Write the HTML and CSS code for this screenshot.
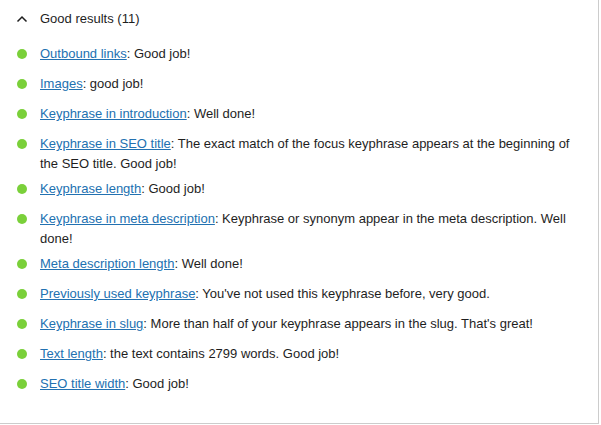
FILE: index.html
```html
<!DOCTYPE html>
<html lang="en">
<head>
    <meta charset="UTF-8">
    <meta name="viewport" content="width=device-width, initial-scale=1.0">
    <title>Good results</title>
    <link rel="stylesheet" href="styles.css">
</head>
<body>
    <div class="panel">
        <button class="toggle" type="button" aria-expanded="true">
            <svg class="chevron" width="12" height="8" viewBox="0 0 12 8" aria-hidden="true">
                <path d="M1.5 6.5 L6 2 L10.5 6.5" fill="none" stroke="#1e1e1e" stroke-width="1.5"/>
            </svg>
            <span>Good results (11)</span>
        </button>

        <ul class="results">
            <li><span class="bullet"></span><p><a href="#">Outbound links</a>: Good job!</p></li>
            <li><span class="bullet"></span><p><a href="#">Images</a>: good job!</p></li>
            <li><span class="bullet"></span><p><a href="#">Keyphrase in introduction</a>: Well done!</p></li>
            <li><span class="bullet"></span><p><a href="#">Keyphrase in SEO title</a>: The exact match of the focus keyphrase appears at the beginning of the SEO title. Good job!</p></li>
            <li><span class="bullet"></span><p><a href="#">Keyphrase length</a>: Good job!</p></li>
            <li><span class="bullet"></span><p><a href="#">Keyphrase in meta description</a>: Keyphrase or synonym appear in the meta description. Well done!</p></li>
            <li><span class="bullet"></span><p><a href="#">Meta description length</a>: Well done!</p></li>
            <li><span class="bullet"></span><p><a href="#">Previously used keyphrase</a>: You've not used this keyphrase before, very good.</p></li>
            <li><span class="bullet"></span><p><a href="#">Keyphrase in slug</a>: More than half of your keyphrase appears in the slug. That's great!</p></li>
            <li><span class="bullet"></span><p><a href="#">Text length</a>: the text contains 2799 words. Good job!</p></li>
            <li><span class="bullet"></span><p><a href="#">SEO title width</a>: Good job!</p></li>
        </ul>
    </div>
</body>
</html>
```

FILE: styles.css
```css
body {
    margin: 0;
    font-family: "Liberation Sans", Arial, sans-serif;
    font-size: 13px;
    color: #1e1e1e;
    background: #fff;
}
.panel {
    width: 599px;
    height: 424px;
    box-sizing: border-box;
    border-right: 1px solid #ccc;
    border-bottom: 1px solid #ccc;
}
.toggle {
    display: flex;
    align-items: center;
    width: 100%;
    height: 38px;
    padding: 0 0 0 16px;
    border: none;
    background: none;
    font: inherit;
    color: #1e1e1e;
    line-height: 20px;
    cursor: pointer;
}
.chevron {
    margin-right: 12px;
}
.results {
    list-style: none;
    margin: 0;
    padding: 6px 24px 0 17px;
}
.results li {
    display: flex;
    align-items: flex-start;
    min-height: 24px;
    margin-bottom: 6px;
}
.results p {
    margin: 0;
    line-height: 19.5px;
}
.bullet {
    flex: none;
    width: 10px;
    height: 10px;
    margin: 5px 13px 0 0;
    border-radius: 50%;
    background: #7ad03a;
}
.results a {
    color: #2271b1;
    text-decoration: underline;
}
```
